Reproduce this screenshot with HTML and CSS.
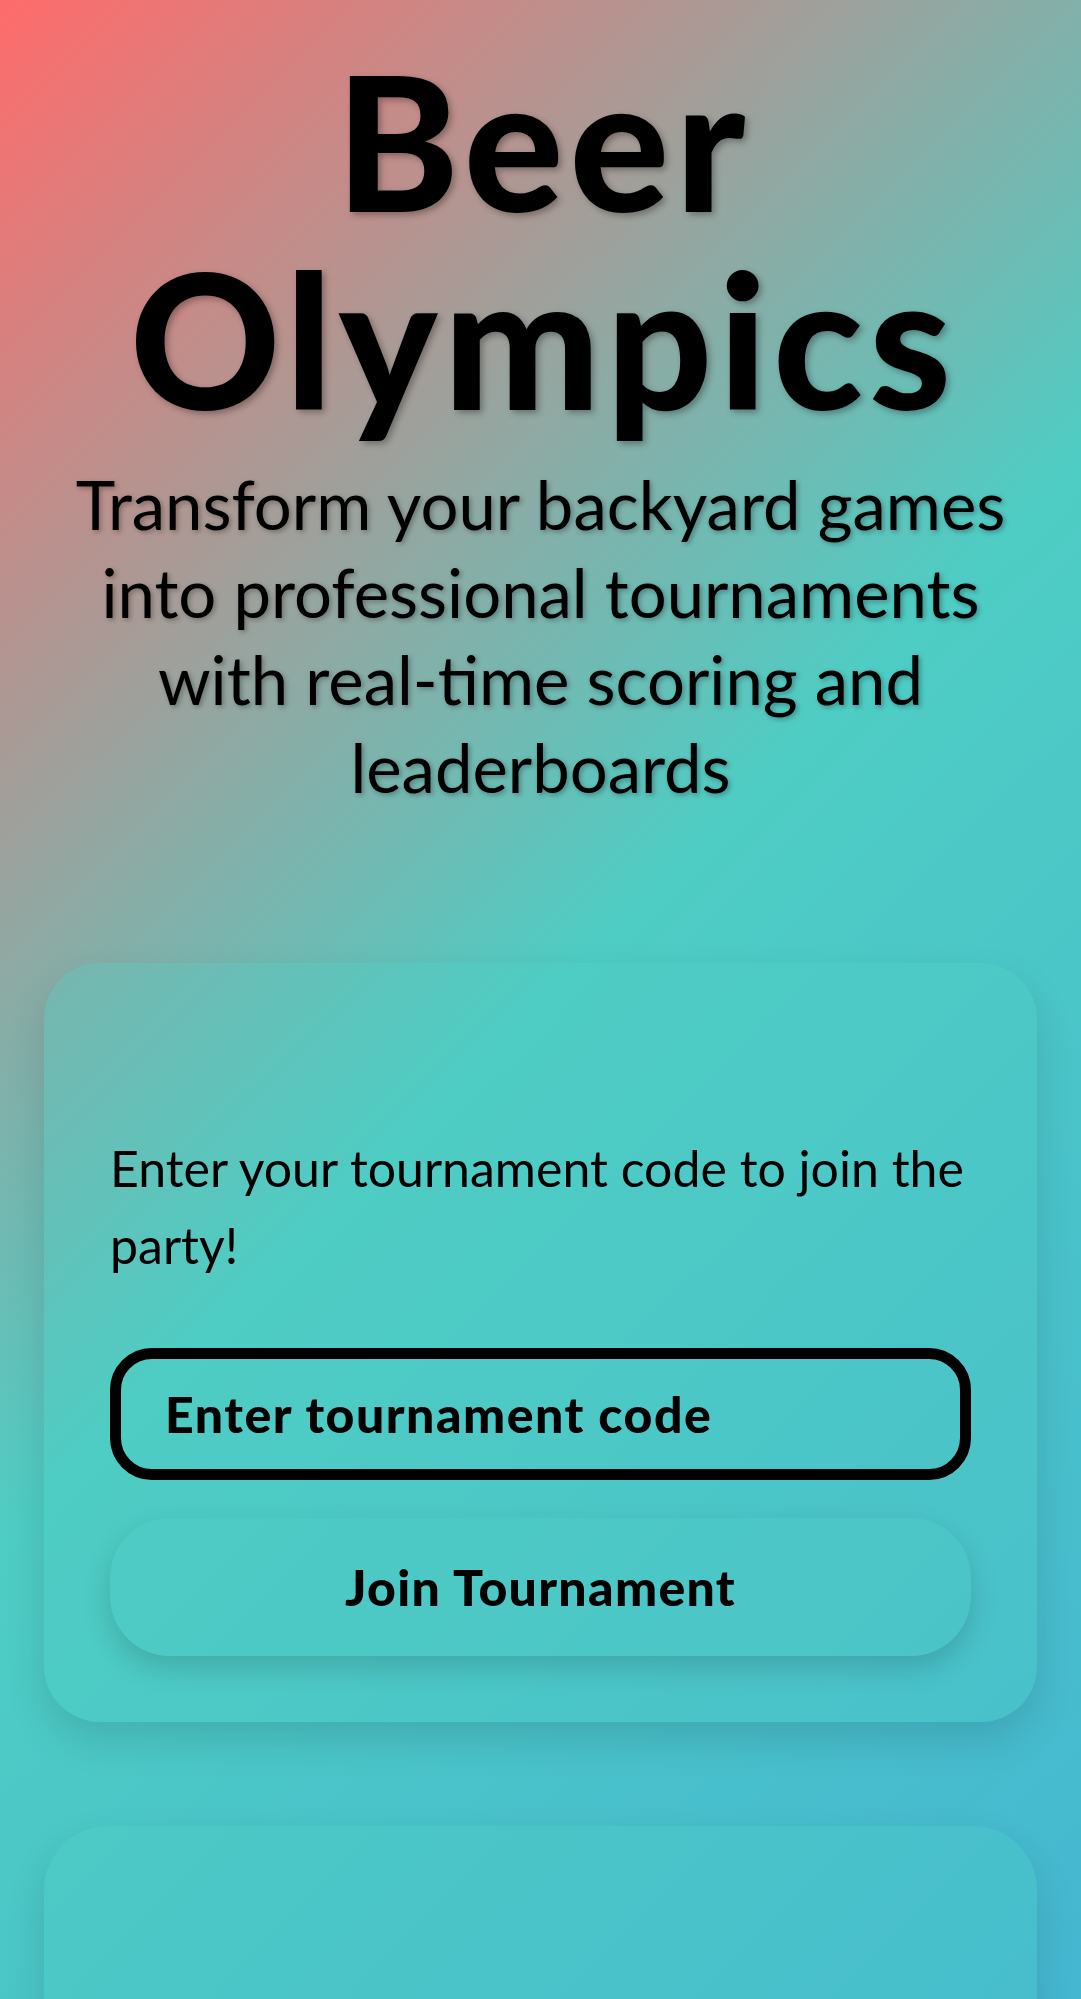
FILE: index.html
```html
<!DOCTYPE html>
<html lang="en">
<head>
<meta charset="utf-8">
<title>Beer Olympics</title>
<link rel="stylesheet" href="styles.css">
</head>
<body>
<div class="page">
  <header class="hero">
    <h1 class="title">Beer Olympics</h1>
    <p class="subtitle">Transform your backyard games into professional tournaments with real-time scoring and leaderboards</p>
  </header>

  <section class="card join-card">
    <div class="card-spacer"></div>
    <p class="card-text">Enter your tournament code to join the party!</p>
    <input class="code-input" type="text" placeholder="Enter tournament code">
    <button class="join-btn" type="button">Join Tournament</button>
  </section>

  <section class="card next-card"></section>
</div>
</body>
</html>
```

FILE: styles.css
```css
html, body {
  margin: 0;
  padding: 0;
}

body {
  background: linear-gradient(135deg, #ff6b6b 0%, #4ecdc4 50%, #45b7d1 100%) fixed;
  font-family: "Lato", "Noto Sans", sans-serif;
  color: #000;
}

.page {
  padding: 0 44px;
  display: flex;
  flex-direction: column;
}

.hero {
  text-align: center;
  padding-top: 41px;
}

.title {
  margin: 0;
  padding-left: 6px;
  font-family: "Lato", sans-serif;
  font-weight: 900;
  font-size: 186px;
  line-height: 198px;
  letter-spacing: 6px;
  text-shadow: 3px 3px 6px rgba(0, 0, 0, 0.3);
}

.subtitle {
  margin: 24px 0 0;
  font-family: "Lato", sans-serif;
  font-weight: 400;
  font-size: 67px;
  line-height: 87.5px;
  text-shadow: 2px 2px 5px rgba(0, 0, 0, 0.3);
}

.card {
  border-radius: 56px;
  background: rgba(78, 205, 196, 0.3);
  box-shadow: 0 18px 40px rgba(0, 0, 0, 0.12);
}

.join-card {
  margin-top: 152px;
  padding: 66px;
  display: flex;
  flex-direction: column;
}

.card-spacer {
  height: 101px;
}

.card-text {
  margin: 0;
  font-size: 50px;
  line-height: 77px;
}

.code-input {
  margin-top: 64px;
  height: 132px;
  box-sizing: border-box;
  border: 11px solid #000;
  border-radius: 42px;
  background: transparent;
  padding: 0 44px;
  font-family: "Lato", sans-serif;
  font-weight: 900;
  font-size: 50px;
  letter-spacing: 1.5px;
  color: #000;
  outline: none;
}

.code-input::placeholder {
  color: #000;
  opacity: 1;
}

.join-btn {
  margin-top: 38px;
  height: 138px;
  border: none;
  border-radius: 60px;
  background: rgba(78, 205, 196, 0.25);
  box-shadow: 0 12px 28px rgba(0, 0, 0, 0.15);
  font-family: "Lato", sans-serif;
  font-weight: 900;
  font-size: 50px;
  letter-spacing: 1.3px;
  color: #000;
  cursor: pointer;
}

.next-card {
  margin-top: 104px;
  height: 600px;
  border-radius: 64px;
}
```
